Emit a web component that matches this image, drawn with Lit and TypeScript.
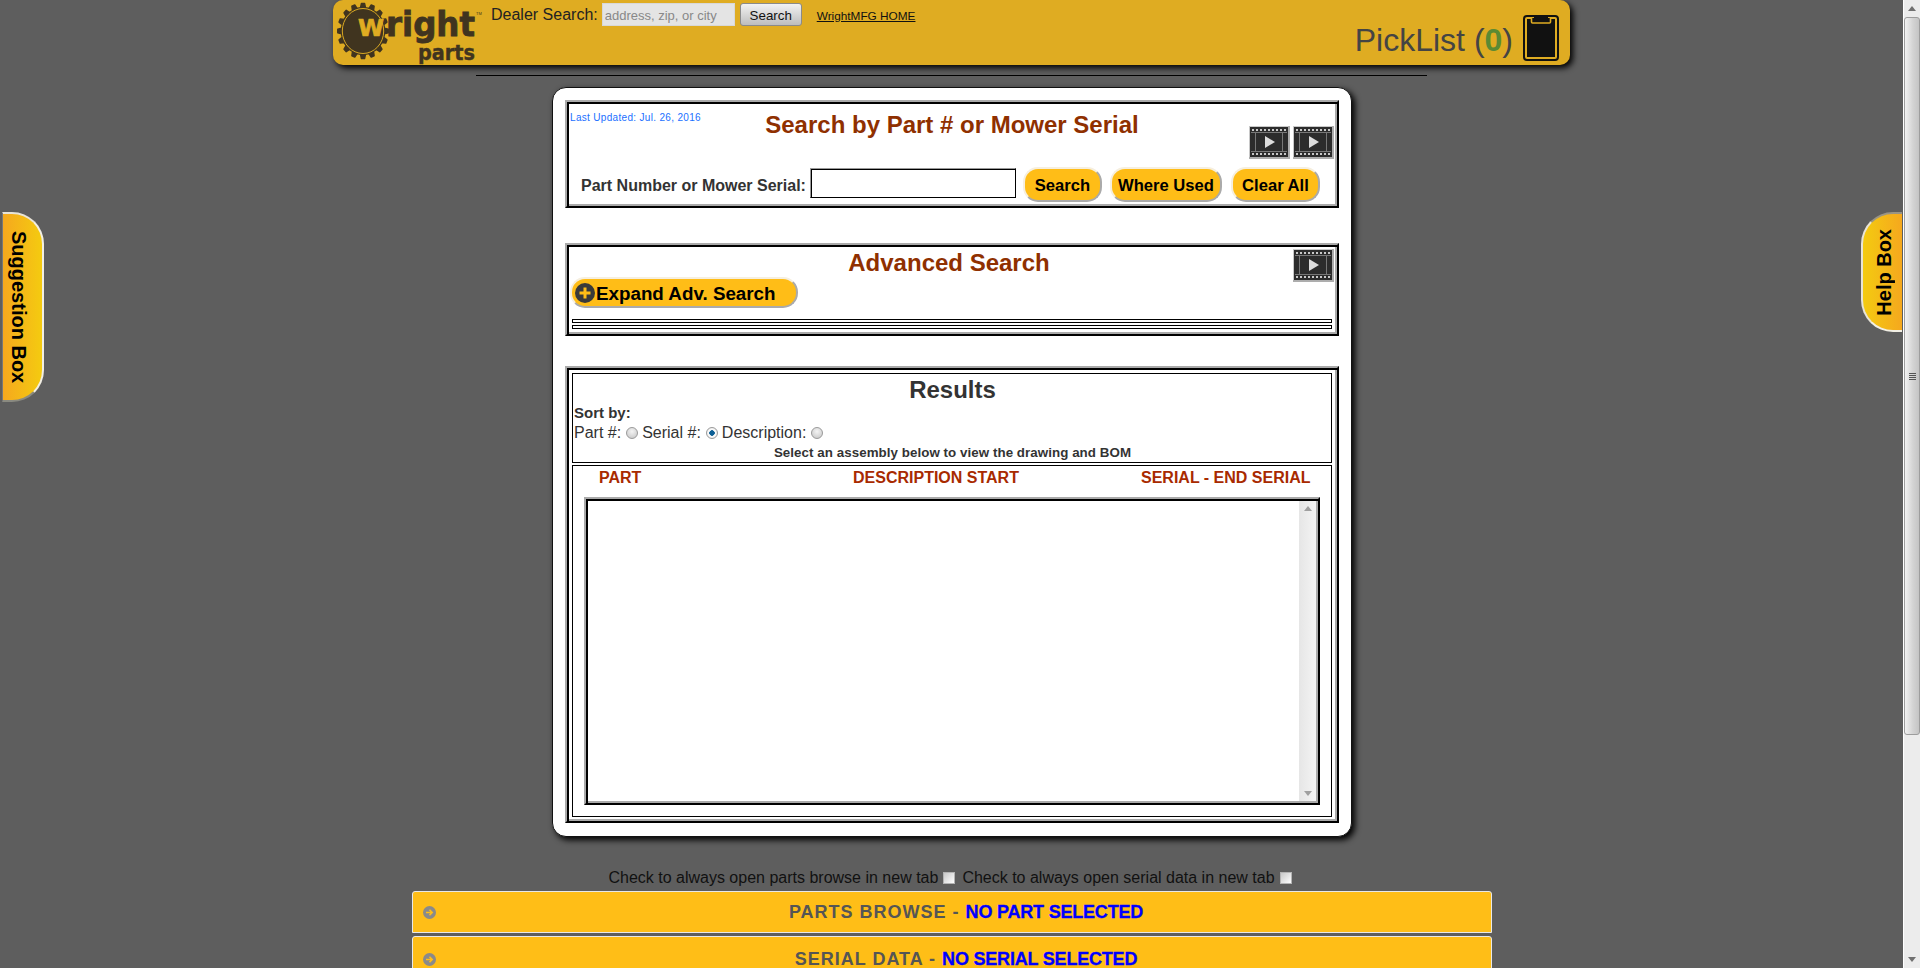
import { LitElement, html, css, svg } from "lit";
import { customElement } from "lit/decorators.js";

const gearPoints = (cx: number, cy: number, ro: number, ri: number, n: number) => {
  const pts: string[] = [];
  const step = (Math.PI * 2) / n;
  for (let i = 0; i < n; i++) {
    const a = i * step - Math.PI / 2;
    const offs: [number, number][] = [[-0.3, ri], [-0.16, ro], [0.16, ro], [0.3, ri]];
    for (const [o, r] of offs) {
      pts.push(`${(cx + Math.cos(a + o * step) * r).toFixed(2)},${(cy + Math.sin(a + o * step) * r).toFixed(2)}`);
    }
  }
  return pts.join(" ");
};

const film = () => {
  const dots = Array.from({ length: 9 }, (_, i) => 3 + i * 4);
  return html`<svg class="film" viewBox="0 0 41 33" width="41" height="33" aria-hidden="true">
    <rect width="41" height="33" fill="#adadad"/>
    <rect width="39" height="1" fill="#c8c8c8"/>
    <rect width="1" height="31" fill="#c8c8c8"/>
    <rect x="1" y="1" width="38" height="30" fill="#2c2c2c"/>
    ${dots.map((x) => svg`<rect x="${x}" y="3" width="2" height="2" fill="#c8c8c8"/><rect x="${x}" y="27" width="2" height="2" fill="#c8c8c8"/>`)}
    <rect x="2" y="6" width="36" height="1" fill="#777"/>
    <rect x="2" y="25" width="36" height="1" fill="#777"/>
    <rect x="6" y="6" width="1" height="20" fill="#777"/>
    <rect x="33" y="6" width="1" height="20" fill="#777"/>
    <path d="M16 10 L26 16 L16 22 Z" fill="#dcdcdc"/>
  </svg>`;
};

@customElement("app-root")
export class AppRoot extends LitElement {
  static styles = css`
    :host {
      display: block;
      position: relative;
      width: 1920px;
      height: 968px;
      overflow: hidden;
      background: #5e5e5e;
      font-family: "Liberation Sans", Arial, sans-serif;
      color: #111;
    }
    .page {
      width: 1903px;
      display: flex;
      flex-direction: column;
      align-items: center;
    }
    .header {
      width: 1237px;
      height: 65px;
      box-sizing: border-box;
      background: #dfac22;
      border-radius: 10px;
      box-shadow: 3px 3px 6px #000;
      display: flex;
      align-items: flex-start;
    }
    .logo { width: 158px; height: 65px; flex: none; display: block; }
    .dealer {
      display: flex;
      align-items: center;
      height: 23px;
      margin-top: 3px;
      font-size: 16px;
      color: #222;
    }
    .dealer > span { margin-top: 1px; }
    .dealer input {
      width: 133px;
      height: 23px;
      box-sizing: border-box;
      margin: 0 5px 0 4px;
      padding: 2px 2px 0;
      border: 1px solid #d8d8d8;
      background: #e4e4e4;
      font: 13px "Liberation Sans", Arial, sans-serif;
      outline: none;
    }
    .dealer input::placeholder { color: #888; opacity: 1; }
    .dealer button {
      width: 62px;
      height: 23px;
      padding: 1px 0 0;
      border: 1px solid #8a8a8a;
      border-radius: 3px;
      background: linear-gradient(#f2f2f2, #bdbdbd);
      font: 13.33px "Liberation Sans", Arial, sans-serif;
      color: #111;
    }
    .home {
      margin: 3px 0 0 15px;
      font-size: 11.8px;
      color: #111;
      text-decoration: underline;
    }
    .pick {
      margin-left: auto;
      height: 46px;
      margin-top: 15px;
      padding-right: 11px;
      display: flex;
      align-items: center;
      gap: 10px;
      font-size: 32px;
      color: #444;
    }
    .pick .txt { margin-top: 4px; }
    .pick b { color: #5b8a33; }
    .pick svg { display: block; }
    .rule {
      width: 951px;
      height: 1px;
      margin-top: 10px;
      background: #000;
    }
    .card {
      width: 800px;
      height: 750px;
      box-sizing: border-box;
      margin: 11px 0 0 1px;
      padding: 12px 12px 0 12px;
      background: #fff;
      border: 1px solid #111;
      border-radius: 14px;
      box-shadow: 3px 3px 6px #000;
    }
    .box {
      box-sizing: border-box;
      border: 2px solid;
      border-color: #aaa #000 #000 #aaa;
      padding: 2px;
      box-shadow: inset 2px 2px 0 #000, inset -2px -2px 0 #aaa;
      width: 774px;
    }
    .search { height: 108px; }
    .top {
      display: grid;
      grid-template-columns: 1fr auto 1fr;
      height: 62px;
      padding: 0 1px;
    }
    .updated {
      margin-top: 8px;
      font-size: 10px;
      letter-spacing: 0.32px;
      color: #1a6fff;
      line-height: 12px;
    }
    h2 {
      margin: 0;
      font-size: 24px;
      font-weight: bold;
      line-height: 28px;
      color: #8f3000;
    }
    .top h2 { margin-top: 7px; }
    .films {
      display: flex;
      justify-content: flex-end;
      gap: 3px;
      padding-top: 22px;
    }
    .film { display: block; }
    .form {
      display: flex;
      align-items: flex-start;
      height: 36px;
      padding-left: 12px;
    }
    .form label {
      margin-top: 11px;
      font-size: 16px;
      line-height: 18px;
      font-weight: bold;
      color: #333;
      white-space: nowrap;
    }
    .form input {
      width: 206px;
      height: 30px;
      box-sizing: border-box;
      margin: 2px 7px 0 4px;
      border: 1px solid;
      border-color: #999 #000 #000 #999;
      box-shadow: inset 1px 1px 0 #000;
      background: #fff;
    }
    .pill {
      height: 35px;
      box-sizing: border-box;
      margin-top: 1px;
      padding: 3px 0 0;
      border: 2px solid;
      border-color: #f6efdf #aaa #aaa #f6efdf;
      border-radius: 15px;
      background: #ffbd17;
      font: bold 16.6px "Liberation Sans", Arial, sans-serif;
      color: #000;
    }
    .s1 { width: 79px; }
    .s2 { width: 112px; margin-left: 8px; }
    .s3 { width: 89px; margin-left: 9px; }
    .adv { height: 93px; margin-top: 35px; }
    .adv .head {
      display: flex;
      height: 30px;
      padding-right: 1px;
    }
    .adv h2 { flex: 1; text-align: center; padding: 2px 0 0 36px; }
    .adv .film { margin-top: 2px; }
    .expand {
      display: flex;
      align-items: center;
      width: 228px;
      height: 31px;
      box-sizing: border-box;
      margin: 0 0 0 1px;
      padding: 2px 0 0 3px;
      border: 2px solid;
      border-color: #f6efdf #aaa #aaa #f6efdf;
      border-radius: 15px;
      background: #ffbd17;
      font: bold 18.8px "Liberation Sans", Arial, sans-serif;
      color: #000;
    }
    .expand svg { flex: none; margin: -2px 1px 0 0; }
    .dbl { margin: 11px 3px 0 3px; }
    .dbl i {
      display: block;
      height: 4px;
      box-sizing: border-box;
      border: 1px solid #000;
      background: #fff;
    }
    .dbl i + i { margin-top: 2px; }
    .results { height: 457px; margin-top: 30px; padding: 5px 5px 4px; }
    .sort {
      height: 90px;
      box-sizing: border-box;
      border: 1px solid #000;
      padding-left: 1px;
      font-size: 16px;
      color: #333;
    }
    .sort h3 {
      margin: 0;
      height: 30px;
      font-size: 24px;
      line-height: 32px;
      text-align: center;
      color: #333;
    }
    .sort .by { font-size: 15px; font-weight: bold; line-height: 18px; height: 19px; }
    .sort .opts { display: flex; align-items: center; height: 19px; }
    .sort input {
      appearance: none;
      width: 12px;
      height: 12px;
      box-sizing: border-box;
      margin: 0 4px 0 5px;
      border: 1px solid #9a9a9a;
      border-radius: 50%;
      background: radial-gradient(circle at 50% 35%, #f4f4f4, #c4c4c4);
    }
    .sort input:checked {
      background: radial-gradient(circle, #0c5f95 0 2.5px, #fff 3px, #ddd 100%);
    }
    .sort .hint {
      font-size: 13.33px;
      letter-spacing: 0.06px;
      font-weight: bold;
      line-height: 18px;
      text-align: center;
      margin-top: 2px;
    }
    .list {
      height: 352px;
      margin-top: 2px;
      box-sizing: border-box;
      border: 1px solid #000;
    }
    .cols {
      display: grid;
      grid-template-columns: 254px 288px 1fr;
      height: 22px;
      padding-left: 26px;
      font-size: 16px;
      font-weight: bold;
      line-height: 24px;
      color: #a82a00;
    }
    .scroll {
      width: 736px;
      height: 308px;
      margin: 9px 0 0 11px;
      box-sizing: border-box;
      border: 2px solid;
      border-color: #aaa #000 #000 #aaa;
      padding: 2px;
      box-shadow: inset 2px 2px 0 #000, inset -2px -2px 0 #aaa;
      display: flex;
      justify-content: flex-end;
    }
    .bar {
      width: 17px;
      background: linear-gradient(90deg, #e6e6e6, #f4f4f4);
      display: flex;
      flex-direction: column;
      justify-content: space-between;
      padding: 5px 0;
      box-sizing: border-box;
      align-items: center;
    }
    .checks {
      display: flex;
      align-items: center;
      height: 18px;
      margin-top: 32px;
      font-size: 16px;
      color: #111;
    }
    .checks input {
      appearance: none;
      width: 12px;
      height: 12px;
      box-sizing: border-box;
      margin: 0 3px 0 5px;
      border: 1px solid #b4b4b4;
      background: linear-gradient(135deg, #c8c8c8, #fff);
    }
    .checks input + span { margin-left: 4px; }
    .acc {
      width: 1080px;
      height: 42px;
      flex: none;
      box-sizing: border-box;
      margin-top: 4px;
      border: 1px solid #e8e8e8;
      border-radius: 3px 3px 0 0;
      background: #ffbe17;
      display: flex;
      align-items: center;
      padding-left: 10px;
    }
    .acc + .acc { margin-top: 3px; height: 44px; padding-top: 2px; }
    .acc .t {
      flex: 1;
      margin-left: 6px;
      text-align: center;
      font-size: 18px;
      font-weight: bold;
      color: #555;
      letter-spacing: 1px;
    }
    .acc .t b {
      color: #0000ff;
      letter-spacing: -0.2px;
      -webkit-text-stroke: 0.3px #0000ff;
    }
    .acc svg { flex: none; }
    .tab {
      position: absolute;
      top: 212px;
      box-sizing: border-box;
      writing-mode: vertical-rl;
      display: flex;
      align-items: center;
      justify-content: center;
      font-size: 20px;
      font-weight: bold;
      color: #000;
    }
    .tab.l {
      left: 2px;
      width: 42px;
      height: 190px;
      padding-right: 8px;
      border: 2px solid;
      border-color: #e8e4d8 #f2efe4 #8a8a80 #777;
      border-left-width: 1px;
      border-radius: 0 32px 32px 0;
      background: linear-gradient(90deg, #f5a81e, #f4cb10);
    }
    .tab.r {
      left: 1861px;
      width: 41px;
      height: 120px;
      padding-left: 4px;
      border: 2px solid;
      border-color: #9a9484 transparent #f2efe4 #e8e4d8;
      border-right: 0;
      border-radius: 32px 0 0 32px;
      background: linear-gradient(90deg, #f4cb10, #f5a81e);
    }
    .tab.r span { transform: rotate(180deg); }
    .vbar {
      position: absolute;
      top: 0;
      left: 1903px;
      width: 17px;
      height: 968px;
      box-sizing: border-box;
      border-left: 1px solid #fff;
      background: #ececec;
      display: flex;
      flex-direction: column;
      align-items: center;
      justify-content: space-between;
      padding: 6px 0;
    }
    .thumb {
      position: absolute;
      top: 17px;
      left: 0;
      width: 16px;
      height: 718px;
      box-sizing: border-box;
      border: 1px solid #9d9d9d;
      border-radius: 3px;
      background: linear-gradient(90deg, #f2f2f2, #d4d4d4 55%, #c4c4c4);
      display: flex;
      flex-direction: column;
      align-items: center;
      justify-content: center;
      gap: 1px;
    }
    .thumb i { display: block; width: 7px; height: 1px; background: #555; }
  `;

  render() {
    return html`
      <div class="page">
        <header class="header">
          <svg class="logo" viewBox="0 0 158 65" aria-label="Wright parts">
            <g transform="translate(30 31) scale(0.92 1)">
              <polygon points="${gearPoints(0, 0, 27.5, 23.5, 16)}" fill="#40341f" stroke="#40341f" stroke-width="1.5" stroke-linejoin="round"/>
              <circle cx="0" cy="0" r="22.5" fill="#40341f" stroke="#dfac22" stroke-width="1"/>
            </g>
            <text x="25" y="36" font-family="DejaVu Sans" font-weight="bold" font-size="23" fill="#dfac22" stroke="#dfac22" stroke-width="0.7" textLength="26" lengthAdjust="spacingAndGlyphs">W</text>
            <text x="53" y="36" font-family="DejaVu Sans" font-weight="bold" font-size="33" fill="#40341f" stroke="#40341f" stroke-width="0.8" textLength="89" lengthAdjust="spacingAndGlyphs">right</text>
            <text x="85" y="60" font-family="DejaVu Sans" font-weight="bold" font-size="22" fill="#40341f" stroke="#40341f" stroke-width="0.4" textLength="57" lengthAdjust="spacingAndGlyphs">parts</text>
            <text x="143" y="15" font-family="Liberation Sans" font-size="4" fill="#40341f">TM</text>
          </svg>
          <div class="dealer">
            <span>Dealer Search:</span>
            <input placeholder="address, zip, or city" />
            <button>Search</button>
            <a class="home">WrightMFG HOME</a>
          </div>
          <div class="pick">
            <span class="txt">PickList (<b>0</b>)</span>
            <svg viewBox="0 0 36 46" width="36" height="46" aria-hidden="true">
              <rect x="1" y="1" width="34" height="44" rx="3" fill="#dfac22" stroke="#111" stroke-width="2"/>
              <rect x="4" y="4" width="28" height="38" fill="#111"/>
              <path d="M8.5 3 V7 a1 1 0 0 0 1 1 H26.5 a1 1 0 0 0 1 -1 V3" fill="#111" stroke="#dfac22" stroke-width="1.6"/>
              <rect x="11" y="0" width="14" height="6" fill="#111"/>
            </svg>
          </div>
        </header>
        <div class="rule"></div>
        <main class="card">
          <section class="box search">
            <div class="top">
              <div class="updated">Last Updated: Jul. 26, 2016</div>
              <h2>Search by Part # or Mower Serial</h2>
              <div class="films">${film()}${film()}</div>
            </div>
            <div class="form">
              <label>Part Number or Mower Serial:</label>
              <input />
              <button class="pill s1">Search</button>
              <button class="pill s2">Where Used</button>
              <button class="pill s3">Clear All</button>
            </div>
          </section>
          <section class="box adv">
            <div class="head">
              <h2>Advanced Search</h2>
              ${film()}
            </div>
            <button class="expand">
              <svg viewBox="0 0 20 20" width="20" height="20" aria-hidden="true">
                <circle cx="10" cy="10" r="10" fill="#3a3a3a"/>
                <path d="M10 4.5 V15.5 M4.5 10 H15.5" stroke="#ffbd17" stroke-width="3"/>
              </svg>
              <span>Expand Adv. Search</span>
            </button>
            <div class="dbl"><i></i><i></i></div>
          </section>
          <section class="box results">
            <div class="sort">
              <h3>Results</h3>
              <div class="by">Sort by:</div>
              <div class="opts">
                <span>Part #:</span><input type="radio" name="s" />
                <span>Serial #:</span><input type="radio" name="s" checked />
                <span>Description:</span><input type="radio" name="s" />
              </div>
              <div class="hint">Select an assembly below to view the drawing and BOM</div>
            </div>
            <div class="list">
              <div class="cols"><span>PART</span><span>DESCRIPTION START</span><span>SERIAL - END SERIAL</span></div>
              <div class="scroll">
                <div class="bar">
                  <svg width="8" height="5" viewBox="0 0 8 5" aria-hidden="true"><path d="M4 0 L8 5 H0 Z" fill="#a0a0a0"/></svg>
                  <svg width="8" height="5" viewBox="0 0 8 5" aria-hidden="true"><path d="M0 0 H8 L4 5 Z" fill="#a0a0a0"/></svg>
                </div>
              </div>
            </div>
          </section>
        </main>
        <div class="checks">
          <span>Check to always open parts browse in new tab</span><input type="checkbox" />
          <span>Check to always open serial data in new tab</span><input type="checkbox" />
        </div>
        <div class="acc">
          <svg width="13" height="13" viewBox="0 0 13 13" aria-hidden="true"><circle cx="6.5" cy="6.5" r="6.5" fill="#8a8a8a"/><path d="M3 6.5 H9 M6.5 3.8 L9.2 6.5 L6.5 9.2" fill="none" stroke="#ffbe17" stroke-width="1.6"/></svg>
          <span class="t">PARTS BROWSE - <b>NO PART SELECTED</b></span>
        </div>
        <div class="acc">
          <svg width="13" height="13" viewBox="0 0 13 13" aria-hidden="true"><circle cx="6.5" cy="6.5" r="6.5" fill="#8a8a8a"/><path d="M3 6.5 H9 M6.5 3.8 L9.2 6.5 L6.5 9.2" fill="none" stroke="#ffbe17" stroke-width="1.6"/></svg>
          <span class="t">SERIAL DATA - <b>NO SERIAL SELECTED</b></span>
        </div>
      </div>
      <div class="tab l"><span>Suggestion Box</span></div>
      <div class="tab r"><span>Help Box</span></div>
      <div class="vbar">
        <svg width="8" height="5" viewBox="0 0 8 5" aria-hidden="true"><path d="M4 0 L8 5 H0 Z" fill="#707070"/></svg>
        <div class="thumb"><i></i><i></i><i></i><i></i></div>
        <svg width="8" height="5" viewBox="0 0 8 5" aria-hidden="true"><path d="M0 0 H8 L4 5 Z" fill="#707070"/></svg>
      </div>
    `;
  }
}
